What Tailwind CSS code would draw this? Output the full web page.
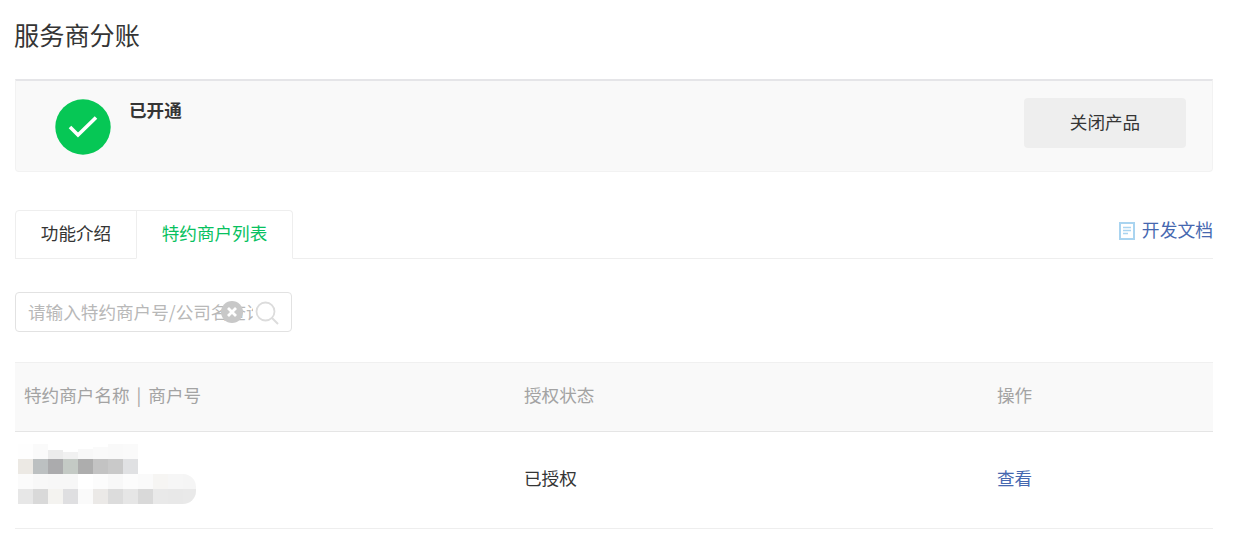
<!DOCTYPE html>
<html lang="zh-CN">
<head>
<meta charset="utf-8">
<title>服务商分账</title>
<script src="https://cdn.jsdelivr.net/npm/@tailwindcss/browser@4"></script>
</head>
<body class="bg-white font-['Noto_Sans_CJK_SC','Liberation_Sans',sans-serif] text-[#353535] overflow-hidden">
<div class="w-[1198px] ml-[15px]">
  <h1 class="h-[79px] pt-[16px] -ml-[1px] text-[25.2px] leading-[36px] font-normal">服务商分账</h1>

  <section class="h-[93px] border-t-2 border-t-[#e5e5e8] flex items-start justify-between bg-[#f9f9f9] border-x border-b border-x-[#f2f2f2] border-b-[#f2f2f2] rounded-b-[4px]">
    <div class="flex items-start pl-[39px] pt-[18px]">
      <svg class="w-[56px] h-[56px]" viewBox="0 0 56 56"><circle cx="28" cy="28" r="27.7" fill="#06c755"/><path d="M15 28 L23 36 L41 18.5" fill="none" stroke="#fff" stroke-width="3.6"/></svg>
      <strong class="ml-[18px] -mt-[3px] text-[17.6px] leading-[28px] font-bold">已开通</strong>
    </div>
    <button class="w-[162px] h-[50px] mt-[17px] mr-[26px] pb-[2px] bg-[#eeeeee] rounded-[4px] text-[17.6px]">关闭产品</button>
  </section>

  <nav class="h-[49px] mt-[38px] flex items-stretch justify-between border-b border-[#eeeeee]">
    <div class="flex h-[49px]">
      <div class="w-[122px] h-[49px] pb-[3px] flex items-center justify-center border border-[#eeeeee] rounded-tl-[4px] text-[17.6px]">功能介绍</div>
      <div class="w-[157px] h-[49px] pb-[3px] -ml-[1px] flex items-center justify-center border border-[#eeeeee] border-b-white rounded-tr-[4px] text-[17.6px] text-[#07c160] bg-white">特约商户列表</div>
    </div>
    <a class="flex items-start pt-[5px] text-[17.8px] leading-[28px] text-[#4668b0]">
      <svg class="w-[16px] h-[18px] mt-[7px] mr-[7px]" viewBox="0 0 16 18"><rect x="1" y="1" width="14" height="16" fill="#fff" stroke="#a9d4f0" stroke-width="2"/><path d="M4 5.5h8M4 8.5h8M4 11.5h5" stroke="#a9d4f0" stroke-width="1.3"/></svg>
      开发文档
    </a>
  </nav>

  <div class="relative mt-[33px] w-[277px] h-[40px] border border-[#e2e2e2] rounded-[4px]">
    <input class="w-[237px] h-[36px] pl-[12px] text-[17.6px] outline-none placeholder:text-[#b8b8b8]" placeholder="请输入特约商户号/公司名查询">
    <svg class="absolute left-[205px] top-[8px] w-[22px] h-[22px]" viewBox="0 0 22 22"><circle cx="11" cy="11" r="11" fill="#c8c8c8"/><path d="M7 7 L15 15 M15 7 L7 15" stroke="#fff" stroke-width="2.8"/></svg>
    <svg class="absolute left-[239px] top-[8px] w-[24px] h-[24px]" viewBox="0 0 24 24"><circle cx="10.5" cy="10.5" r="9" fill="none" stroke="#dcdcdc" stroke-width="1.8"/><path d="M17 17 L23 23" stroke="#dcdcdc" stroke-width="2"/></svg>
  </div>

  <div class="mt-[30px]">
    <div class="h-[70px] pb-[3px] grid grid-cols-[500px_473px_1fr] items-center pl-[9px] bg-[#f9f9f9] border-y border-t-[#f0f0f0] border-b-[#e5e5e5] text-[17.6px] text-[#a3a3a3]">
      <span>特约商户名称<span class="mx-[7px] text-[#a3a3a3]">|</span>商户号</span><span>授权状态</span><span>操作</span>
    </div>
    <div class="h-[97px] pb-[4px] grid grid-cols-[500px_473px_1fr] items-center pl-[9px] border-b border-[#eeeeee] text-[17.6px]">
      <div class="-ml-[6px] -mt-[8px] w-[178px] h-[60px] grid grid-cols-[repeat(11,15px)_13px] grid-rows-[repeat(4,15px)]">
        <i class="bg-[#fefefe]"></i><i class="bg-[#fafafa]"></i><i class="bg-[#ececec] mt-[6px]"></i><i class="bg-[#f1f1f1] mt-[8px]"></i><i class="bg-[#f8f8f8] mt-[5px]"></i><i class="bg-[#fafafa] mt-[3px]"></i><i class="bg-[#f9f9f9]"></i><i class="bg-[#fafafa]"></i><i></i><i></i><i></i><i></i>
        <i class="bg-[#ece9e4]"></i><i class="bg-[#bcc0c1]"></i><i class="bg-[#ababad]"></i><i class="bg-[#c4cac5]"></i><i class="bg-[#adadad]"></i><i class="bg-[#c3c3c3]"></i><i class="bg-[#c9c9c9]"></i><i class="bg-[#e0e1e3]"></i><i></i><i></i><i></i><i></i>
        <i class="bg-[#fbfbfb]"></i><i class="bg-[#f8f8f8]"></i><i class="bg-[#f7f7f7]"></i><i class="bg-[#f7f7f7]"></i><i class="bg-[#ffffff]"></i><i class="bg-[#fcfcfc]"></i><i class="bg-[#f8f8f8]"></i><i class="bg-[#fcfcfc]"></i><i class="bg-[#fafafa]"></i><i class="bg-[#f6f5f3]"></i><i class="bg-[#f6f6f6]"></i><i class="bg-[#f5f5f5] rounded-tr-[13px]"></i>
        <i class="bg-[#e7e7e7]"></i><i class="bg-[#d9d9d9]"></i><i class="bg-[#f4f3f0]"></i><i class="bg-[#dfdfe1]"></i><i class="bg-[#fafafa]"></i><i class="bg-[#ebe9e7]"></i><i class="bg-[#dcdcdc]"></i><i class="bg-[#e6e6e6]"></i><i class="bg-[#d9d9d9]"></i><i class="bg-[#e9e9e9]"></i><i class="bg-[#e8e8e8]"></i><i class="bg-[#e9e9e9] rounded-br-[13px]"></i>
      </div>
      <span>已授权</span>
      <a class="text-[#4668b0]">查看</a>
    </div>
  </div>
</div>
</body>
</html>
